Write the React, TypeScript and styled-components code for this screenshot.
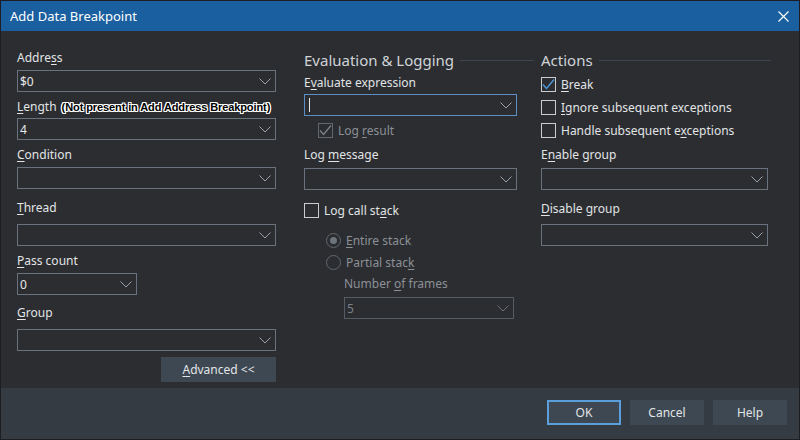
import styled, { createGlobalStyle } from "styled-components";
import { ReactNode } from "react";

const Global = createGlobalStyle`
  html, body { margin: 0; padding: 0; background: #2b2d31; }
  body { font-family: "Noto Sans", "Open Sans", sans-serif; font-size: 12px; color: #e2e4e6; }
  u { text-decoration-thickness: 1px; text-underline-offset: 2px; }
`;

const Window = styled.div`
  width: 800px;
  height: 440px;
  box-sizing: border-box;
  border: 1px solid #1c1e21;
  display: flex;
  flex-direction: column;
  background: #2b2d31;
`;

const TitleBar = styled.div`
  height: 30px;
  flex: none;
  background: #1a5f9f;
  color: #fff;
  font-size: 13px;
  display: flex;
  align-items: center;
  justify-content: space-between;
  padding: 0 10px 0 9px;
`;

const Body = styled.div`
  flex: 1;
  display: flex;
  padding: 19px 0 0 16px;
`;

const Column = styled.div<{ $w: number; $ml: number }>`
  width: ${(p) => p.$w}px;
  margin-left: ${(p) => p.$ml}px;
  display: flex;
  flex-direction: column;
  align-items: flex-start;
`;

const Label = styled.div<{ $mt: number; $ml?: number; $dim?: boolean }>`
  height: 16px;
  line-height: 16px;
  margin-top: ${(p) => p.$mt}px;
  margin-left: ${(p) => p.$ml ?? 0}px;
  color: ${(p) => (p.$dim ? "#8b9096" : "#e2e4e6")};
  white-space: nowrap;
`;

const Note = styled.span`
  margin-left: 5px;
  font-family: "Liberation Sans", Arial, sans-serif;
  font-weight: bold;
  font-size: 11px;
  letter-spacing: -0.1px;
  color: #000;
  text-shadow: 1px 0 #fff, -1px 0 #fff, 0 1px #fff, 0 -1px #fff, 1px 1px #fff, -1px -1px #fff, 1px -1px #fff, -1px 1px #fff;
`;

const Heading = styled.div`
  width: 100%;
  height: 20px;
  display: flex;
  align-items: center;
  font-size: 15px;
  color: #d0d4d8;
  gap: 6px;
  &::after { content: ""; flex: 1; height: 1px; background: #3d4650; }
`;

const ComboBox = styled.div<{ $mt: number; $ml?: number; $w: number; $focus?: boolean; $dim?: boolean }>`
  margin-top: ${(p) => p.$mt}px;
  margin-left: ${(p) => p.$ml ?? 0}px;
  width: ${(p) => p.$w}px;
  height: 22px;
  box-sizing: border-box;
  border: 1px solid ${(p) => (p.$focus ? "#5b8fc4" : p.$dim ? "#555c64" : "#6a737d")};
  display: flex;
  align-items: center;
  padding: 0 4px 0 2px;
  color: ${(p) => (p.$dim ? "#7c8188" : "#e6e8ea")};
`;

const Value = styled.span`
  flex: 1;
  display: flex;
  align-items: center;
`;

const Caret = styled.span`
  width: 1px;
  height: 14px;
  margin-left: 2px;
  background: #e6e8ea;
`;

const Check = styled.div<{ $mt: number; $ml?: number; $dim?: boolean }>`
  margin-top: ${(p) => p.$mt}px;
  margin-left: ${(p) => p.$ml ?? 0}px;
  height: 16px;
  display: flex;
  align-items: center;
  gap: 5px;
  color: ${(p) => (p.$dim ? "#8b9096" : "#e2e4e6")};
  white-space: nowrap;
`;

const Box = styled.span<{ $dim?: boolean }>`
  width: 13px;
  height: 13px;
  border: 1px solid ${(p) => (p.$dim ? "#62686f" : "#c9ccd0")};
  display: inline-flex;
  align-items: center;
  justify-content: center;
`;

const Radio = styled.span<{ $on?: boolean }>`
  width: 13px;
  height: 13px;
  border-radius: 50%;
  border: 1px solid #62686f;
  display: inline-flex;
  align-items: center;
  justify-content: center;
  &::after {
    content: "";
    width: 7px;
    height: 7px;
    border-radius: 50%;
    background: ${(p) => (p.$on ? "#6e747b" : "transparent")};
  }
`;

const Button = styled.button<{ $default?: boolean }>`
  width: 74px;
  height: 25px;
  box-sizing: border-box;
  background: #3d4853;
  border: ${(p) => (p.$default ? "2px solid #5a9fdc" : "1px solid #3d4853")};
  color: #e2e4e6;
  font-family: inherit;
  font-size: 12px;
  padding: 0;
`;

const AdvancedButton = styled(Button)`
  width: 115px;
  margin-top: 6px;
  align-self: flex-end;
`;

const Footer = styled.div`
  height: 49px;
  flex: none;
  background: #353b42;
  display: flex;
  justify-content: flex-end;
  align-items: center;
  gap: 9px;
  padding: 0 12px 2px 0;
`;

const Chevron = ({ dim }: { dim?: boolean }) => (
  <svg width="12" height="7" viewBox="0 0 12 7">
    <path d="M0.5 0.5 L6 6 L11.5 0.5" fill="none" stroke={dim ? "#6a7078" : "#9aa1a8"} strokeWidth="1" />
  </svg>
);

const Combo = (p: { mt: number; ml?: number; w: number; value?: ReactNode; focus?: boolean; dim?: boolean }) => (
  <ComboBox $mt={p.mt} $ml={p.ml} $w={p.w} $focus={p.focus} $dim={p.dim}>
    <Value>{p.value}</Value>
    <Chevron dim={p.dim} />
  </ComboBox>
);

const Tick = ({ color }: { color: string }) => (
  <svg width="13" height="11" viewBox="0 0 13 11">
    <path d="M1 5.5 L4.5 9.5 L12 0.5" fill="none" stroke={color} strokeWidth="1.3" />
  </svg>
);

export default function App() {
  return (
    <Window>
      <Global />
      <TitleBar>
        <span>Add Data Breakpoint</span>
        <svg width="11" height="11" viewBox="0 0 11 11">
          <path d="M0.5 0.5 L10.5 10.5 M10.5 0.5 L0.5 10.5" stroke="#fff" strokeWidth="1.2" />
        </svg>
      </TitleBar>
      <Body>
        <Column $w={259} $ml={0}>
          <Label $mt={0}>Addre<u>s</u>s</Label>
          <Combo mt={4} w={259} value="$0" />
          <Label $mt={7}>
            <u>L</u>ength
            <Note>(Not present in Add Address Breakpoint)</Note>
          </Label>
          <Combo mt={3} w={259} value="4" />
          <Label $mt={7}><u>C</u>ondition</Label>
          <Combo mt={4} w={259} />
          <Label $mt={11}><u>T</u>hread</Label>
          <Combo mt={8} w={259} />
          <Label $mt={7}><u>P</u>ass count</Label>
          <Combo mt={4} w={120} value="0" />
          <Label $mt={10}><u>G</u>roup</Label>
          <Combo mt={8} w={259} />
          <AdvancedButton><u>A</u>dvanced &lt;&lt;</AdvancedButton>
        </Column>
        <Column $w={230} $ml={28}>
          <Heading>Evaluation &amp; Logging</Heading>
          <Label $mt={5}>E<u>v</u>aluate expression</Label>
          <Combo mt={3} w={213} value={<Caret />} focus />
          <Check $mt={6} $ml={14} $dim>
            <Box $dim><Tick color="#7d838a" /></Box>
            <span>Log <u>r</u>esult</span>
          </Check>
          <Label $mt={9}>Log <u>m</u>essage</Label>
          <Combo mt={5} w={213} />
          <Check $mt={12}>
            <Box />
            <span>Log call st<u>a</u>ck</span>
          </Check>
          <Check $mt={14} $ml={22} $dim>
            <Radio $on />
            <span><u>E</u>ntire stack</span>
          </Check>
          <Check $mt={6} $ml={22} $dim>
            <Radio />
            <span>Partial stac<u>k</u></span>
          </Check>
          <Label $mt={6} $ml={40} $dim>Number <u>o</u>f frames</Label>
          <Combo mt={5} ml={40} w={170} value="5" dim />
        </Column>
        <Column $w={230} $ml={7}>
          <Heading>Actions</Heading>
          <Check $mt={6}>
            <Box><Tick color="#4f9be0" /></Box>
            <span><u>B</u>reak</span>
          </Check>
          <Check $mt={7}>
            <Box />
            <span><u>I</u>gnore subsequent exceptions</span>
          </Check>
          <Check $mt={7}>
            <Box />
            <span>Handle subsequent e<u>x</u>ceptions</span>
          </Check>
          <Label $mt={9}>E<u>n</u>able group</Label>
          <Combo mt={5} w={227} />
          <Label $mt={11}><u>D</u>isable group</Label>
          <Combo mt={7} w={227} />
        </Column>
      </Body>
      <Footer>
        <Button $default>OK</Button>
        <Button>Cancel</Button>
        <Button>Help</Button>
      </Footer>
    </Window>
  );
}
